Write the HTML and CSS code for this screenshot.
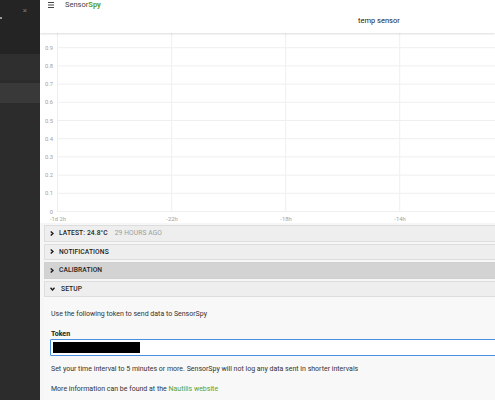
FILE: index.html
```html
<!DOCTYPE html>
<html>
<head>
<meta charset="utf-8">
<link rel="stylesheet" href="styles.css">
</head>
<body>
<div class="app">
  <aside class="sidebar">
    <div class="side-top">
      <span class="side-mark"></span>
      <span class="close">×</span>
    </div>
    <div class="band band1"></div>
    <div class="band band2"></div>
  </aside>
  <main class="main">
    <header class="topbar">
      <div class="brand-row">
        <svg class="hamburger" width="6" height="6" viewBox="0 0 6 6"><rect x="0" y="0" width="6" height="1" fill="#444"/><rect x="0" y="2.5" width="6" height="1" fill="#444"/><rect x="0" y="5" width="6" height="1" fill="#444"/></svg>
        <span class="brand">Sensor<b>Spy</b></span>
      </div>
      <div class="title">temp sensor</div>
    </header>
    <section class="chart">
      <svg width="455" height="190" viewBox="0 0 455 190">
        <g stroke="#efefef" stroke-width="1">
          <line x1="17" y1="14.7" x2="455" y2="14.7"/>
          <line x1="17" y1="32.9" x2="455" y2="32.9"/>
          <line x1="17" y1="51.1" x2="455" y2="51.1"/>
          <line x1="17" y1="69.3" x2="455" y2="69.3"/>
          <line x1="17" y1="87.5" x2="455" y2="87.5"/>
          <line x1="17" y1="105.7" x2="455" y2="105.7"/>
          <line x1="17" y1="123.9" x2="455" y2="123.9"/>
          <line x1="17" y1="142.1" x2="455" y2="142.1"/>
          <line x1="17" y1="160.3" x2="455" y2="160.3"/>
          <line x1="17" y1="178.5" x2="455" y2="178.5"/>
          <line x1="17.5" y1="0" x2="17.5" y2="178.5"/>
          <line x1="131.7" y1="0" x2="131.7" y2="178.5"/>
          <line x1="245.7" y1="0" x2="245.7" y2="178.5"/>
          <line x1="359.7" y1="0" x2="359.7" y2="178.5"/>
        </g>
        <g class="ylab" text-anchor="end">
          <text x="13" y="16.8">0.9</text>
          <text x="13" y="35">0.8</text>
          <text x="13" y="53.2">0.7</text>
          <text x="13" y="71.4">0.6</text>
          <text x="13" y="89.6">0.5</text>
          <text x="13" y="107.8">0.4</text>
          <text x="13" y="126">0.3</text>
          <text x="13" y="144.2">0.2</text>
          <text x="13" y="162.4">0.1</text>
          <text x="13" y="180.6">0</text>
        </g>
        <g class="xlab" text-anchor="middle">
          <text x="18" y="187.5">-1d 2h</text>
          <text x="132" y="187.5">-22h</text>
          <text x="246" y="187.5">-18h</text>
          <text x="360" y="187.5">-14h</text>
        </g>
      </svg>
    </section>
    <div class="panels">
      <div class="bar">
        <svg class="caret" width="4" height="5" viewBox="0 0 4 5"><path d="M0.7 0.5 L3 2.5 L0.7 4.5" fill="none" stroke="#1a1a1a" stroke-width="1.4"/></svg>
        <span>Latest: 24.8°C</span><span class="ago">29 hours ago</span>
      </div>
      <div class="bar">
        <svg class="caret" width="4" height="5" viewBox="0 0 4 5"><path d="M0.7 0.5 L3 2.5 L0.7 4.5" fill="none" stroke="#1a1a1a" stroke-width="1.4"/></svg>
        <span>Notifications</span>
      </div>
      <div class="bar bar-active">
        <svg class="caret" width="4" height="5" viewBox="0 0 4 5"><path d="M0.7 0.5 L3 2.5 L0.7 4.5" fill="none" stroke="#1a1a1a" stroke-width="1.4"/></svg>
        <span>Calibration</span>
      </div>
      <div class="bar bar-open">
        <svg class="caret caret-down" width="5" height="4" viewBox="0 0 5 4"><path d="M0.5 0.7 L2.5 3 L4.5 0.7" fill="none" stroke="#1a1a1a" stroke-width="1.4"/></svg>
        <span>Setup</span>
      </div>
      <div class="setup-body">
        <p class="line first">Use the following token to send data to SensorSpy</p>
        <p class="label">Token</p>
        <div class="token-input"><div class="redacted"></div></div>
        <p class="line note">Set your time interval to 5 minutes or more. SensorSpy will not log any data sent in shorter intervals</p>
        <p class="line more">More information can be found at the <a class="link">Nautilis website</a></p>
      </div>
    </div>
  </main>
</div>
</body>
</html>
```
FILE: styles.css
```css
html, body {
  margin: 0;
  padding: 0;
  width: 495px;
  height: 400px;
  overflow: hidden;
  font-family: Roboto, "Liberation Sans", sans-serif;
  background: #f6f6f6;
}

.app {
  display: flex;
  height: 400px;
}

.sidebar {
  width: 40px;
  flex: none;
  background: #2c2c2c;
  display: flex;
  flex-direction: column;
}

.side-top {
  height: 54px;
  background: #242424;
  display: flex;
  justify-content: space-between;
  align-items: flex-start;
  padding-right: 13px;
  box-sizing: border-box;
}

.side-mark {
  width: 2px;
  height: 2px;
  background: #9a9a9a;
  margin-top: 17px;
}

.close {
  color: #7a7a7a;
  font-size: 8px;
  line-height: 8px;
  margin-top: 7px;
}

.band1 {
  height: 26px;
  background: #2f2f2f;
  margin-bottom: 3px;
}

.band2 {
  height: 20px;
  background: #393939;
}

.main {
  flex: 1;
  min-width: 0;
  display: flex;
  flex-direction: column;
  overflow: hidden;
  background: #f6f6f6;
}

.topbar {
  height: 33px;
  flex: none;
  background: #fff;
  box-shadow: 0 1px 2px rgba(0, 0, 0, 0.14);
  position: relative;
  z-index: 1;
}

.brand-row {
  display: flex;
  align-items: center;
  gap: 11px;
  padding-left: 8px;
  padding-top: 1px;
  height: 8px;
}

.brand {
  font-size: 7.5px;
  line-height: 8px;
  color: #444;
}

.brand b {
  color: #5aa02c;
  font-weight: 700;
}

.title {
  padding-left: 318px;
  padding-top: 8px;
  font-size: 7.5px;
  line-height: 8px;
  color: #222;
}

.chart {
  flex: none;
  background: #fff;
  height: 190px;
}

.chart svg {
  display: block;
}

.ylab, .xlab {
  font-family: Roboto, "Liberation Sans", sans-serif;
  font-size: 5.8px;
  fill: #a0a0a0;
}

.panels {
  padding: 2px 0 0 4px;
  margin-right: -12px;
}

.bar {
  height: 16.5px;
  box-sizing: border-box;
  border: 1px solid #dddddd;
  background: #eeeeee;
  margin-bottom: 2px;
  display: flex;
  align-items: center;
  padding-left: 5px;
  font-size: 6.7px;
  font-weight: 500;
  color: #1e1e1e;
  text-transform: uppercase;
  letter-spacing: 0.1px;
}

.caret {
  flex: none;
  margin-right: 5px;
}

.caret-down {
  margin-right: 6px;
}

.ago {
  color: #9c9c9c;
  font-weight: 400;
  margin-left: 7px;
}

.bar-active {
  background: #d3d3d3;
  border-color: #d0d0d0;
}

.bar-open {
  margin-bottom: 0;
}

.setup-body {
  background: #f8f8f8;
  padding: 12px 0 20px 7px;
  font-size: 7px;
  line-height: 10px;
  color: #333;
}

.setup-body p {
  margin: 0;
}

.label {
  margin-top: 10px !important;
  font-weight: 700;
  color: #222;
}

.token-input {
  margin-left: -1px;
  height: 17px;
  box-sizing: border-box;
  border: 1.5px solid #4a90e2;
  border-radius: 1px;
  background: #fff;
  padding: 1.7px 1.5px;
}

.redacted {
  width: 87px;
  height: 11px;
  background: #000;
}

.note {
  margin-top: 7.5px !important;
}

.more {
  margin-top: 10px !important;
}

.link {
  color: #5aa02c;
}
```
